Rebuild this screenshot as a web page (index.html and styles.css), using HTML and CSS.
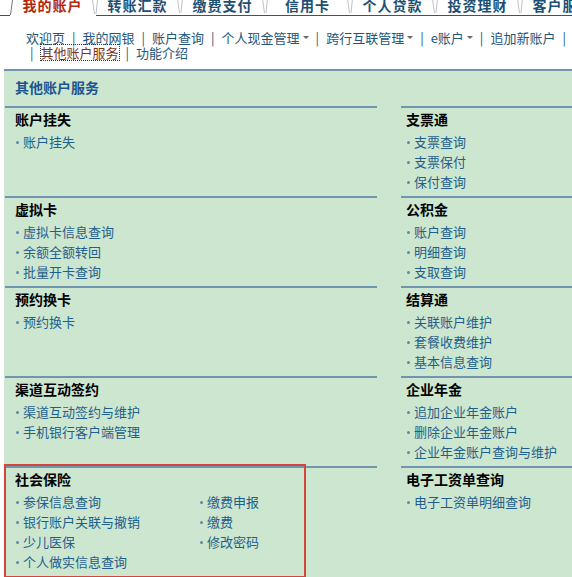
FILE: index.html
```html
<!DOCTYPE html>
<html lang="zh-CN">
<head>
<meta charset="utf-8">
<title>其他账户服务</title>
<link rel="stylesheet" href="styles.css">
</head>
<body>
<div class="tabbar">
  <svg class="lead" width="13" height="19" viewBox="0 0 13 19"><line x1="0" y1="18.5" x2="10" y2="18.5" stroke="#3b5566" stroke-width="1"/><line x1="12.5" y1="3" x2="10.5" y2="18" stroke="#6f7a82" stroke-width="1"/></svg>
  <div class="tab active">我的账户</div>
  <svg class="sep first" width="6" height="19" viewBox="0 0 6 19"><path d="M0.5 3 L2.5 17 M5.5 3 L4 17" stroke="#b9c0c6" stroke-width="1" fill="none"/></svg>
  <div class="tab">转账汇款</div>
  <svg class="sep" width="6" height="19" viewBox="0 0 6 19"><path d="M0.5 3 L2.5 17 M5.5 3 L4 17" stroke="#b9c0c6" stroke-width="1" fill="none"/></svg>
  <div class="tab">缴费支付</div>
  <svg class="sep" width="6" height="19" viewBox="0 0 6 19"><path d="M0.5 3 L2.5 17 M5.5 3 L4 17" stroke="#b9c0c6" stroke-width="1" fill="none"/></svg>
  <div class="tab">信用卡</div>
  <svg class="sep" width="6" height="19" viewBox="0 0 6 19"><path d="M0.5 3 L2.5 17 M5.5 3 L4 17" stroke="#b9c0c6" stroke-width="1" fill="none"/></svg>
  <div class="tab">个人贷款</div>
  <svg class="sep" width="6" height="19" viewBox="0 0 6 19"><path d="M0.5 3 L2.5 17 M5.5 3 L4 17" stroke="#b9c0c6" stroke-width="1" fill="none"/></svg>
  <div class="tab">投资理财</div>
  <svg class="sep" width="6" height="19" viewBox="0 0 6 19"><path d="M0.5 3 L2.5 17 M5.5 3 L4 17" stroke="#b9c0c6" stroke-width="1" fill="none"/></svg>
  <div class="tab">客户服务</div>
</div>

<div class="subnav">
  <div class="subline first-line">
    <span class="link">欢迎页</span><span class="pipe">|</span><span class="link">我的网银</span><span class="pipe">|</span><span class="link">账户查询</span><span class="pipe">|</span><span class="link">个人现金管理<i class="caret"></i></span><span class="pipe">|</span><span class="link">跨行互联管理<i class="caret"></i></span><span class="pipe">|</span><span class="link">e账户<i class="caret"></i></span><span class="pipe">|</span><span class="link">追加新账户</span><span class="pipe">|</span>
  </div>
  <div class="subline second-line">
    <span class="pipe">|</span><span class="link current">其他账户服务</span><span class="pipe">|</span><span class="link">功能介绍</span>
  </div>
</div>

<div class="panel">
  <div class="panel-title">其他账户服务</div>
  <div class="grid">
    <div class="section left">
      <div class="sec-title">账户挂失</div>
      <div class="item">账户挂失</div>
    </div>
    <div class="section right">
      <div class="sec-title">支票通</div>
      <div class="item">支票查询</div>
      <div class="item">支票保付</div>
      <div class="item">保付查询</div>
    </div>

    <div class="section left">
      <div class="sec-title">虚拟卡</div>
      <div class="item">虚拟卡信息查询</div>
      <div class="item">余额全额转回</div>
      <div class="item">批量开卡查询</div>
    </div>
    <div class="section right">
      <div class="sec-title">公积金</div>
      <div class="item">账户查询</div>
      <div class="item">明细查询</div>
      <div class="item">支取查询</div>
    </div>

    <div class="section left">
      <div class="sec-title">预约换卡</div>
      <div class="item">预约换卡</div>
    </div>
    <div class="section right">
      <div class="sec-title">结算通</div>
      <div class="item">关联账户维护</div>
      <div class="item">套餐收费维护</div>
      <div class="item">基本信息查询</div>
    </div>

    <div class="section left">
      <div class="sec-title">渠道互动签约</div>
      <div class="item">渠道互动签约与维护</div>
      <div class="item">手机银行客户端管理</div>
    </div>
    <div class="section right">
      <div class="sec-title">企业年金</div>
      <div class="item">追加企业年金账户</div>
      <div class="item">删除企业年金账户</div>
      <div class="item">企业年金账户查询与维护</div>
    </div>

    <div class="section left highlighted">
      <div class="sec-title">社会保险</div>
      <div class="two-col">
        <div class="item">参保信息查询</div>
        <div class="item">缴费申报</div>
        <div class="item">银行账户关联与撤销</div>
        <div class="item">缴费</div>
        <div class="item">少儿医保</div>
        <div class="item">修改密码</div>
        <div class="item">个人做实信息查询</div>
      </div>
    </div>
    <div class="section right">
      <div class="sec-title">电子工资单查询</div>
      <div class="item">电子工资单明细查询</div>
    </div>
  </div>
</div>
</body>
</html>
```

FILE: styles.css
```css
html, body {
  margin: 0;
  padding: 0;
  overflow: hidden;
  background: #ffffff;
}

body {
  font-family: "Noto Sans CJK SC", "Noto Sans", "Liberation Sans", sans-serif;
  font-size: 13px;
  color: #000;
  width: 572px;
}

/* ---------- top tabs ---------- */
.tabbar {
  display: flex;
  margin-top: -3px;
  height: 19px;
  white-space: nowrap;
  overflow: hidden;
}

.lead {
  flex: none;
  display: block;
}

.tab {
  flex: none;
  width: 79px;
  height: 18px;
  line-height: 17px;
  text-align: center;
  font-size: 14px;
  font-weight: bold;
  letter-spacing: 1px;
  color: #1d4f72;
  border-bottom: 1px solid #3b5566;
}

.tab.active {
  color: #b3260c;
  border-bottom-color: #ffffff;
}

.sep {
  flex: none;
  display: block;
  height: 18px;
  border-bottom: 1px solid #3b5566;
}

.sep.first {
  border-bottom: none;
  height: 19px;
  background: linear-gradient(to right, transparent 4px, #3b5566 4px) no-repeat 0 18px / 6px 1px;
}

/* ---------- sub navigation ---------- */
.subnav {
  margin-top: 14px;
  font-size: 13px;
  line-height: 15px;
  color: #24567a;
}

.subline {
  display: flex;
  align-items: center;
  height: 15px;
  white-space: nowrap;
}

.first-line {
  padding-left: 26px;
}

.second-line {
  padding-left: 23px;
}

.link {
  display: flex;
  align-items: center;
  height: 15px;
}

.pipe {
  margin: 0 7px;
  color: #24567a;
}

.caret {
  display: block;
  width: 0;
  height: 0;
  margin-left: 3px;
  border-left: 3px solid transparent;
  border-right: 3px solid transparent;
  border-top: 3px solid #666;
}

.link.current {
  color: #7c3416;
  outline: 1px dotted #333;
  outline-offset: 0;
}

/* ---------- green panel ---------- */
.panel {
  margin-top: 9px;
  margin-left: 4px;
  width: 568px;
  padding-left: 1px;
  box-sizing: border-box;
  background: #cde6cf;
  border-top: 2px solid #6f96ae;
  min-height: 510px;
}

.panel-title {
  padding: 6px 0 9px 10px;
  line-height: 20px;
  font-size: 14px;
  font-weight: bold;
  color: #1c5690;
}

.grid {
  display: grid;
  grid-template-columns: 372px 1fr;
  column-gap: 24px;
}

.section {
  border-top: 2px solid #6f96ae;
  padding: 2px 0 4px 10px;
}

.section.right {
  padding-left: 5px;
}

.sec-title {
  font-size: 14px;
  font-weight: bold;
  line-height: 18px;
  height: 18px;
  margin-bottom: 4px;
  color: #000;
}

.item {
  display: flex;
  align-items: center;
  height: 20px;
  line-height: 20px;
  font-size: 13px;
  color: #1f5f8c;
  white-space: nowrap;
}

.item::before {
  content: "";
  display: block;
  flex: none;
  width: 3px;
  height: 3px;
  border-radius: 50%;
  margin: 1px 4px 0 1px;
  background: #5d8aa8;
}

.two-col {
  display: grid;
  grid-template-columns: 184px auto;
}

.highlighted {
  position: relative;
}

.highlighted::after {
  content: "";
  position: absolute;
  left: -1px;
  top: -4px;
  width: 302px;
  height: 114px;
  box-sizing: border-box;
  border: 2px solid #d4453d;
  pointer-events: none;
}
```
